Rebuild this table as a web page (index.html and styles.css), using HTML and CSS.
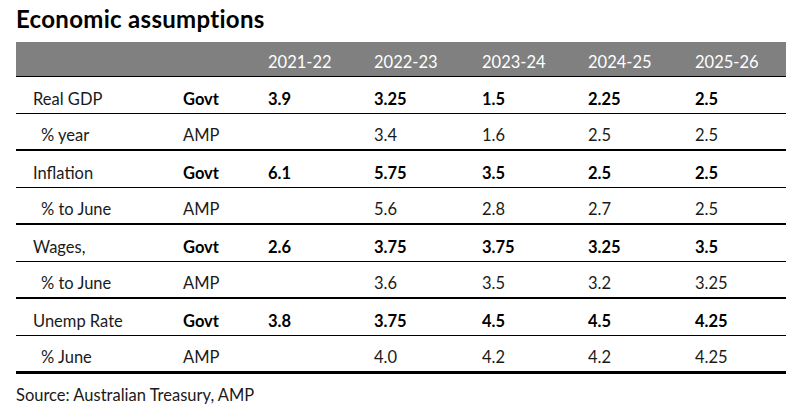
FILE: index.html
```html
<!DOCTYPE html>
<html>
<head>
<meta charset="utf-8">
<link rel="stylesheet" href="styles.css">
</head>
<body>
<div class="page">
  <h1 class="title">Economic assumptions</h1>
  <table class="tbl">
    <colgroup>
      <col class="c-label"><col class="c-src"><col class="c-y1"><col class="c-y2"><col class="c-y3"><col class="c-y4"><col class="c-y5">
    </colgroup>
    <thead>
      <tr class="head">
        <th></th><th></th><th>2021-22</th><th>2022-23</th><th>2023-24</th><th>2024-25</th><th>2025-26</th>
      </tr>
    </thead>
    <tbody>
      <tr class="govt"><td class="lab">Real GDP</td><td class="b">Govt</td><td class="b">3.9</td><td class="b">3.25</td><td class="b">1.5</td><td class="b">2.25</td><td class="b">2.5</td></tr>
      <tr class="amp"><td class="sub">% year</td><td>AMP</td><td></td><td>3.4</td><td>1.6</td><td>2.5</td><td>2.5</td></tr>
      <tr class="govt"><td class="lab">Inflation</td><td class="b">Govt</td><td class="b">6.1</td><td class="b">5.75</td><td class="b">3.5</td><td class="b">2.5</td><td class="b">2.5</td></tr>
      <tr class="amp"><td class="sub">% to June</td><td>AMP</td><td></td><td>5.6</td><td>2.8</td><td>2.7</td><td>2.5</td></tr>
      <tr class="govt"><td class="lab">Wages,</td><td class="b">Govt</td><td class="b">2.6</td><td class="b">3.75</td><td class="b">3.75</td><td class="b">3.25</td><td class="b">3.5</td></tr>
      <tr class="amp"><td class="sub">% to June</td><td>AMP</td><td></td><td>3.6</td><td>3.5</td><td>3.2</td><td>3.25</td></tr>
      <tr class="govt"><td class="lab">Unemp Rate</td><td class="b">Govt</td><td class="b">3.8</td><td class="b">3.75</td><td class="b">4.5</td><td class="b">4.5</td><td class="b">4.25</td></tr>
      <tr class="amp last"><td class="sub">% June</td><td>AMP</td><td></td><td>4.0</td><td>4.2</td><td>4.2</td><td>4.25</td></tr>
    </tbody>
  </table>
  <p class="source">Source: Australian Treasury, AMP</p>
</div>
</body>
</html>
```
FILE: styles.css
```css
html, body {
  margin: 0;
  padding: 0;
  background: #ffffff;
}
.page {
  padding: 0 0 0 16px;
  width: 770px;
  font-family: Lato, "Open Sans", sans-serif;
  color: #1a1a1a;
}
.title {
  margin: 0;
  height: 42px;
  font-size: 24px;
  font-weight: 700;
  line-height: 38px;
  color: #000;
  letter-spacing: 0.3px;
}
.tbl {
  border-collapse: collapse;
  table-layout: fixed;
  width: 770px;
  font-size: 16.5px;
}
.c-label { width: 167px; }
.c-src { width: 85px; }
.c-y1 { width: 106px; }
.c-y2 { width: 108px; }
.c-y3 { width: 106px; }
.c-y4 { width: 107px; }
.c-y5 { width: 91px; }
.tbl th, .tbl td {
  padding: 0;
  text-align: left;
  vertical-align: bottom;
  white-space: nowrap;
}
.head th {
  background: #808080;
  color: #fff;
  font-weight: 400;
  height: 34px;
  padding-bottom: 4px;
  box-sizing: border-box;
  border-bottom: 1px solid #000;
}
.tbl tbody td {
  height: 37px;
  padding-bottom: 4px;
  box-sizing: border-box;
  font-weight: 400;
}
.govt td { border-bottom: 1px solid #000; }
.amp td { border-bottom: 2px solid #000; }
.amp.last td { border-bottom: 3px solid #000; }
.tbl td.lab { padding-left: 17px; }
.tbl td.sub { padding-left: 25px; }
.tbl td.b { font-weight: 700; color: #000; }
.source {
  margin: 11px 0 0 0;
  font-size: 16.5px;
  color: #1a1a1a;
}
```
